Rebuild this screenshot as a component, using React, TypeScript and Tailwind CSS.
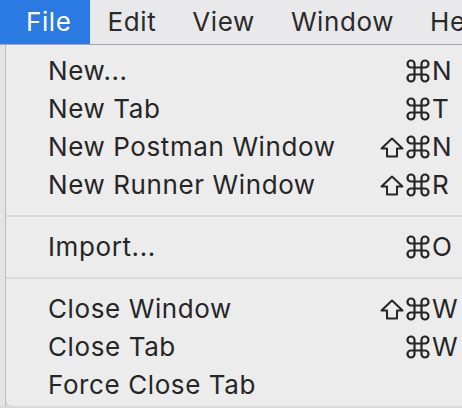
import { Command } from "lucide-react";

type Item = { label: string; shift?: boolean; key?: string } | "sep";

const ITEMS: Item[] = [
  { label: "New...", key: "N" },
  { label: "New Tab", key: "T" },
  { label: "New Postman Window", shift: true, key: "N" },
  { label: "New Runner Window", shift: true, key: "R" },
  "sep",
  { label: "Import...", key: "O" },
  "sep",
  { label: "Close Window", shift: true, key: "W" },
  { label: "Close Tab", key: "W" },
  { label: "Force Close Tab" },
];

const MENUS = ["Edit", "View", "Window", "Help"];

function ShiftGlyph() {
  return (
    <svg width="24" height="21" viewBox="0 0 24 21" fill="none" stroke="currentColor" strokeWidth="2" strokeLinejoin="round">
      <path d="M12 1.5 22.5 11.5H17V19.5H7V11.5H1.5Z" />
    </svg>
  );
}

export default function App() {
  return (
    <div
      className="relative h-[408px] w-[462px] overflow-hidden bg-[#d9d9d9] text-[26px] leading-none tracking-[0.6px] text-[#262626]"
      style={{ fontFamily: "Inter, 'Liberation Sans', sans-serif" }}
    >
      {/* menu bar */}
      <div className="flex h-[45px] items-stretch whitespace-nowrap border-b-[1.5px] border-[#a8a8a8] bg-[#e9e9eb]">
        <div className="flex items-center bg-[#2a7ae2] pl-[26px] pr-[18px] text-white">File</div>
        {MENUS.map((m) => (
          <div key={m} className="flex items-center px-[18px] text-[#2a2a2a]">
            {m}
          </div>
        ))}
      </div>

      <div className="flex">
        {/* sliver of the window behind */}
        <div className="h-[361px] w-[6px] shrink-0 border-r border-[#bdbdbd] bg-[#e4e4e4]" />

        {/* dropdown */}
        <div className="flex h-[361px] flex-1 flex-col rounded-bl-[7px] bg-[#ececec] pt-[7px]">
          {ITEMS.map((it, i) =>
            it === "sep" ? (
              <div key={i} className="flex h-[24px] items-center">
                <div className="h-[2.5px] w-full bg-[#d9d9d9]" />
              </div>
            ) : (
              <div key={i} className="flex h-[38px] items-center whitespace-nowrap pl-[42px]">
                <span className="flex-1">{it.label}</span>
                <div className="flex w-[30px] shrink-0 items-center justify-end">
                  {it.shift ? <ShiftGlyph /> : null}
                </div>
                <div className="flex w-[58px] shrink-0 items-center">
                  {it.key ? (
                    <>
                      <Command size={28} strokeWidth={1.9} />
                      <span>{it.key}</span>
                    </>
                  ) : null}
                </div>
              </div>
            ),
          )}
        </div>
      </div>
    </div>
  );
}
